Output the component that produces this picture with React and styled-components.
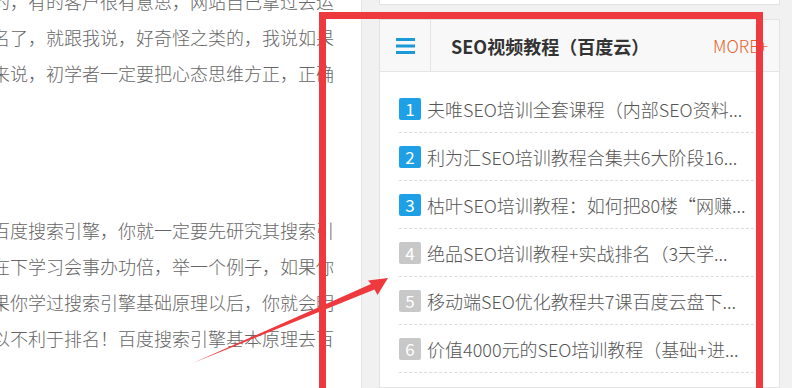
import React from 'react'
import styled, { createGlobalStyle } from 'styled-components'

const GlobalStyle = createGlobalStyle`
  html, body {
    margin: 0;
    padding: 0;
    background: #f1f1f1;
    overflow: hidden;
  }
  body {
    font-family: "Noto Sans CJK SC", "Noto Sans", sans-serif;
  }
`;

const Page = styled.div`
  position: relative;
  width: 792px;
  height: 388px;
  display: flex;
  flex-direction: row;
  overflow: hidden;
`;

const Article = styled.div`
  width: 362px;
  flex-shrink: 0;
  background: #fff;
  border-right: 1px solid #e4e4e4;
  padding-right: 27px;
  box-sizing: border-box;
  overflow: hidden;
`;

const Paragraph = styled.div`
  display: flex;
  flex-direction: column;
  align-items: flex-end;
  margin-top: ${p => p.$top}px;
`;

const Line = styled.div`
  white-space: nowrap;
  font-size: 18px;
  font-weight: 300;
  line-height: 36px;
  color: #666;
`;

const Sidebar = styled.div`
  flex: 1;
  background: #f1f1f1;
  padding: 0 12px 0 17px;
  display: flex;
  flex-direction: column;
  gap: 14px;
`;

const PrevCard = styled.div`
  height: 4px;
  background: #fff;
  border: 1px solid #e3e3e3;
  border-top: none;
`;

const Card = styled.div`
  background: #fff;
  border: 1px solid #e3e3e3;
  flex: 1;
`;

const Header = styled.div`
  display: flex;
  align-items: center;
  height: 51px;
  background: #f8f8f8;
  border-bottom: 1px solid #e5e5e5;
`;

const IconCell = styled.div`
  width: 50px;
  height: 100%;
  display: flex;
  align-items: center;
  justify-content: center;
  border-right: 1px solid #e5e5e5;
`;

const Title = styled.div`
  flex: 1;
  padding-left: 20px;
  font-size: 18px;
  font-weight: 700;
  color: #333;
`;

const More = styled.a`
  font-size: 17px;
  font-weight: 300;
  color: #e5622e;
  margin-right: 11px;
  text-decoration: none;
`;

const List = styled.ul`
  list-style: none;
  margin: 0;
  padding: 13px 20px 0 19px;
`;

const Item = styled.li`
  display: flex;
  align-items: center;
  height: 47px;
  border-bottom: 1px dashed #dcdcdc;
`;

const Badge = styled.span`
  width: 22px;
  height: 22px;
  flex-shrink: 0;
  border-radius: 2px;
  background: ${p => (p.$hot ? '#1ea0e6' : '#c8c8c8')};
  color: #fff;
  font-size: 17px;
  line-height: 22px;
  text-align: center;
  margin-right: 6px;
`;

const ItemText = styled.span`
  flex: 1;
  min-width: 0;
  font-size: 18px;
  font-weight: 300;
  color: #555;
  white-space: nowrap;
  overflow: hidden;
  text-overflow: ellipsis;
`;

const Highlight = styled.div`
  position: absolute;
  left: 319px;
  top: 12px;
  width: 444px;
  height: 420px;
  border: 7px solid #ee3a3e;
  box-sizing: border-box;
  pointer-events: none;
`;

const Overlay = styled.svg`
  position: absolute;
  left: 0;
  top: 0;
  pointer-events: none;
`;

const MenuIcon = () => (
  <svg width="19" height="16" viewBox="0 0 19 16">
    <rect x="0" y="0" width="19" height="3" fill="#1a9ad8" />
    <rect x="0" y="6.5" width="19" height="3" fill="#1a9ad8" />
    <rect x="0" y="13" width="19" height="3" fill="#1a9ad8" />
  </svg>
)

const para1 = [
  '的，有的客户很有意思，网站自己拿过去运',
  '名了，就跟我说，好奇怪之类的，我说如果',
  '来说，初学者一定要把心态思维方正，正确',
]

const para2 = [
  '百度搜索引擎，你就一定要先研究其搜索引',
  '在下学习会事办功倍，举一个例子，如果你',
  '果你学过搜索引擎基础原理以后，你就会明',
  '以不利于排名！百度搜索引擎基本原理去百',
]

const items = [
  '夫唯SEO培训全套课程（内部SEO资料...',
  '利为汇SEO培训教程合集共6大阶段16...',
  '枯叶SEO培训教程：如何把80楼“网赚...',
  '绝品SEO培训教程+实战排名（3天学...',
  '移动端SEO优化教程共7课百度云盘下...',
  '价值4000元的SEO培训教程（基础+进...',
]

const App = () => {
  return (
    <Page>
      <GlobalStyle />
      <Article>
        <Paragraph $top={-17}>
          {para1.map(l => <Line key={l}>{l}</Line>)}
        </Paragraph>
        <Paragraph $top={121}>
          {para2.map(l => <Line key={l}>{l}</Line>)}
        </Paragraph>
      </Article>
      <Sidebar>
        <PrevCard />
        <Card>
          <Header>
            <IconCell><MenuIcon /></IconCell>
            <Title>SEO视频教程（百度云）</Title>
            <More href="#">MORE+</More>
          </Header>
          <List>
            {items.map((t, i) => (
              <Item key={t}>
                <Badge $hot={i < 3}>{i + 1}</Badge>
                <ItemText>{t}</ItemText>
              </Item>
            ))}
          </List>
        </Card>
      </Sidebar>
      <Highlight />
      <Overlay width="792" height="388" viewBox="0 0 792 388">
        <path
          d="M193 363 L371 284 L368 280.5 L388 278 L377.5 295 L374.5 289.5 Z"
          fill="#ee3a3e"
        />
      </Overlay>
    </Page>
  )
}

export default App
